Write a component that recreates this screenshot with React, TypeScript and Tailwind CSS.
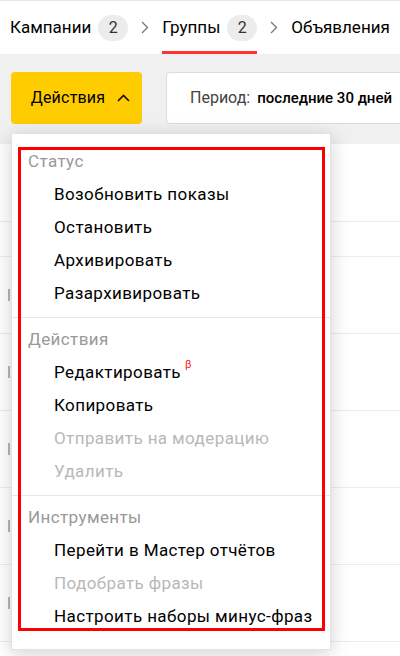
import React from "react";

type Item = { label: string; disabled?: boolean; beta?: boolean };

const sections: { title: string; items: Item[] }[] = [
  {
    title: "Статус",
    items: [
      { label: "Возобновить показы" },
      { label: "Остановить" },
      { label: "Архивировать" },
      { label: "Разархивировать" },
    ],
  },
  {
    title: "Действия",
    items: [
      { label: "Редактировать", beta: true },
      { label: "Копировать" },
      { label: "Отправить на модерацию", disabled: true },
      { label: "Удалить", disabled: true },
    ],
  },
  {
    title: "Инструменты",
    items: [
      { label: "Перейти в Мастер отчётов" },
      { label: "Подобрать фразы", disabled: true },
      { label: "Настроить наборы минус-фраз" },
    ],
  },
];

function Chevron() {
  return (
    <svg width="8" height="13" viewBox="0 0 8 13" className="mx-[13px]">
      <polyline points="1,1 6.5,6.5 1,12" fill="none" stroke="#777" strokeWidth="1.3" />
    </svg>
  );
}

function Badge({ n }: { n: number }) {
  return (
    <span className="ml-[7px] flex h-[26px] w-[30px] items-center justify-center rounded-full bg-[#ececec] text-[16px] text-[#333]">
      {n}
    </span>
  );
}

export default function App() {
  return (
    <div
      className="relative h-[656px] w-[400px] overflow-hidden bg-white text-black"
      style={{ fontFamily: "Roboto, 'Noto Sans', sans-serif" }}
    >
      {/* tabs */}
      <header className="flex h-[54px] items-center border-t border-[#e6e6e6] pl-[10px] text-[17px]">
        <div className="flex items-center">
          <span>Кампании</span>
          <Badge n={2} />
        </div>
        <Chevron />
        <div className="relative flex h-full items-center">
          <span>Группы</span>
          <Badge n={2} />
          <div className="absolute bottom-0 left-0 right-0 h-[3px] bg-[#ff3333]" />
        </div>
        <Chevron />
        <span className="whitespace-nowrap">Объявления</span>
      </header>

      {/* toolbar */}
      <div className="flex h-[90px] items-start gap-[24px] bg-[#f0f0f0] pl-[11px] pt-[18px]">
        <button className="flex h-[52px] w-[131px] shrink-0 items-center justify-center gap-[12px] rounded-[4px] bg-[#ffcc00] pl-[8px] text-[16px] tracking-[0.2px]">
          <span>Действия</span>
          <svg width="13" height="8" viewBox="0 0 13 8">
            <polyline points="1,7 6.5,1.5 12,7" fill="none" stroke="#111" strokeWidth="1.6" />
          </svg>
        </button>
        <div className="flex h-[52px] shrink-0 items-center whitespace-nowrap rounded-[4px] border border-[#dcdcdc] bg-white pl-[23px] pr-[20px] text-[16px]">
          <span className="text-[#444]">Период:</span>
          <span className="ml-[7px] text-[15px] font-medium">последние 30 дней</span>
        </div>
      </div>

      {/* table behind */}
      <div className="flex flex-col">
        <div className="h-[78px] border-b border-[#ececec]" />
        <div className="h-[35px] border-b border-[#ececec]" />
        {[0, 1, 2, 3, 4].map((i) => (
          <div key={i} className="flex h-[77px] items-center border-b border-[#ececec] pl-[8px]">
            <div className="h-[12px] w-[2px] bg-[#b5b5b5]" />
          </div>
        ))}
      </div>

      {/* dropdown */}
      <div className="absolute left-[11px] top-[133px] h-[517px] w-[320px] border border-[#e2e2e2] bg-white pt-[6px] tracking-[0.4px] shadow-[0_4px_18px_rgba(0,0,0,0.18)]">
        {sections.map((s, si) => (
          <div key={s.title} className={si > 0 ? "border-t border-[#e6e6e6] pb-[7px] pt-[5px]" : "pb-[7px] pt-[5px]"}>
            <div className="flex h-[33px] items-center pl-[16px] text-[17px] text-[#999]">{s.title}</div>
            {s.items.map((it) => (
              <div
                key={it.label}
                className={`flex h-[33px] items-center whitespace-nowrap pl-[42px] text-[17px] ${it.disabled ? "text-[#b8b8b8]" : "text-black"}`}
              >
                <span>{it.label}</span>
                {it.beta && <span className="mb-[14px] ml-[4px] text-[11px] text-[#ff2020]">β</span>}
              </div>
            ))}
          </div>
        ))}
        {/* annotation frame */}
        <div className="pointer-events-none absolute bottom-[18px] left-[6px] right-[5px] top-[13px] border-[3px] border-[#ff0000]" />
      </div>
    </div>
  );
}
